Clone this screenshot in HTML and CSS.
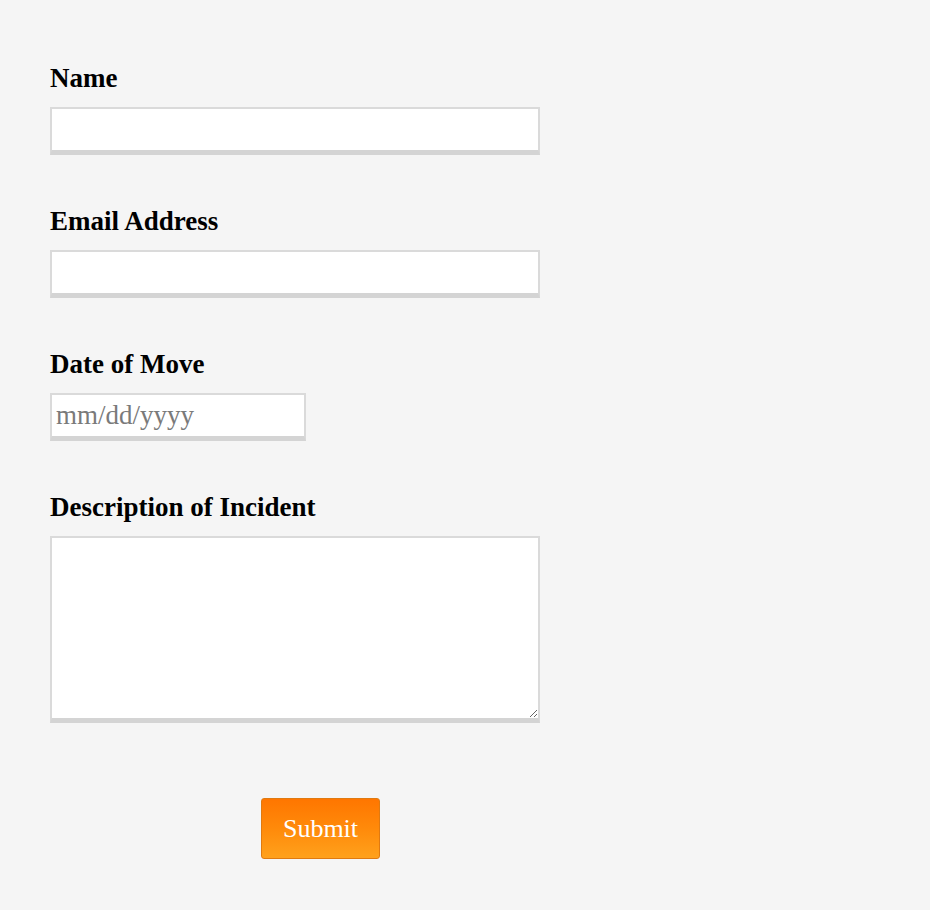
FILE: index.html
```html
<!DOCTYPE html>
<html>
<head>
<meta charset="utf-8">
<link rel="stylesheet" href="styles.css">
</head>
<body>
<form class="form">
  <div class="field">
    <label class="label" for="name">Name</label>
    <input class="input" id="name" type="text">
  </div>
  <div class="field">
    <label class="label" for="email">Email Address</label>
    <input class="input" id="email" type="text">
  </div>
  <div class="field">
    <label class="label" for="date">Date of Move</label>
    <input class="input input-date" id="date" type="text" placeholder="mm/dd/yyyy">
  </div>
  <div class="field">
    <label class="label" for="desc">Description of Incident</label>
    <textarea class="input textarea" id="desc"></textarea>
  </div>
  <div class="actions">
    <button class="submit" type="button">Submit</button>
  </div>
</form>
</body>
</html>
```

FILE: styles.css
```css
html, body {
  margin: 0;
  padding: 0;
  background: #f5f5f5;
}
body {
  font-family: "Liberation Serif", "Times New Roman", serif;
  color: #000;
}
.form {
  padding: 62px 0 0 50px;
  width: 490px;
  display: flex;
  flex-direction: column;
  gap: 50px;
}
.field {
  display: flex;
  flex-direction: column;
  align-items: flex-start;
  gap: 15px;
}
.label {
  display: block;
  box-sizing: border-box;
  font-size: 27px;
  font-weight: bold;
  line-height: 28px;
  height: 30px;
  padding-top: 2px;
}
.input {
  box-sizing: border-box;
  width: 490px;
  height: 48px;
  margin: 0;
  background: #fff;
  border: 2px solid #dadada;
  border-bottom: 5px solid #d4d4d4;
  border-radius: 0;
  padding: 0 4px;
  font-family: "Liberation Serif", "Times New Roman", serif;
  font-size: 27px;
  outline: none;
}
.input-date {
  width: 256px;
  height: 48px;
}
.input-date::placeholder {
  color: #7a7a7a;
}
.textarea {
  height: 187px;
  resize: both;
  display: block;
}
.actions {
  padding-left: 211px;
  padding-top: 25px;
}
.submit {
  box-sizing: border-box;
  width: 119px;
  height: 61px;
  border: 1px solid #e07a10;
  border-radius: 3px;
  background: linear-gradient(to bottom, #ff7600 0%, #ff8a0a 50%, #ffa11c 100%);
  color: #fff;
  font-family: "Liberation Serif", "Times New Roman", serif;
  font-size: 26px;
  padding: 0;
  cursor: pointer;
}
```
